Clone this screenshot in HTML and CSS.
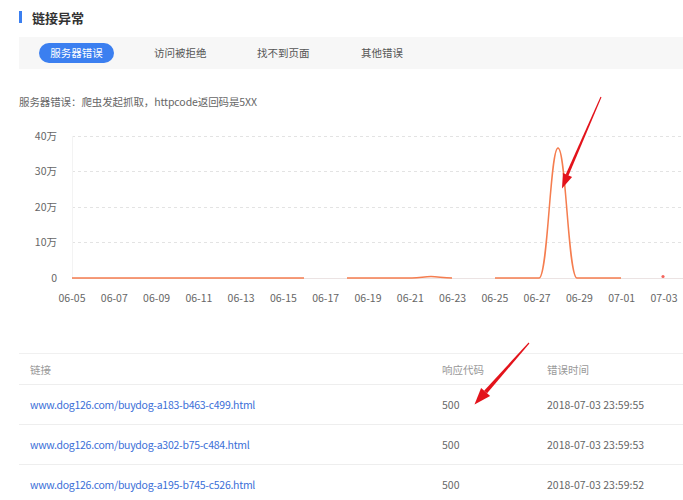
FILE: index.html
```html
<!DOCTYPE html>
<html lang="zh-CN">
<head>
<meta charset="utf-8">
<title>链接异常</title>
<link rel="stylesheet" href="styles.css">
</head>
<body>
<div class="page">
  <div class="title"><span class="title-bar"></span><span class="title-text">链接异常</span></div>
  <div class="tabs">
    <span class="tab tab-active">服务器错误</span>
    <span class="tab">访问被拒绝</span>
    <span class="tab">找不到页面</span>
    <span class="tab">其他错误</span>
  </div>
  <p class="desc">服务器错误：爬虫发起抓取，httpcode返回码是5XX</p>
  <svg class="chart" width="664" height="215" viewBox="19 110 664 215" xmlns="http://www.w3.org/2000/svg">
    <g class="grid">
      <line x1="72" y1="136.5" x2="683" y2="136.5"/>
      <line x1="72" y1="171.5" x2="683" y2="171.5"/>
      <line x1="72" y1="207.5" x2="683" y2="207.5"/>
      <line x1="72" y1="242.5" x2="683" y2="242.5"/>
    </g>
    <line class="yaxis" x1="72.5" y1="136" x2="72.5" y2="278"/>
    <line class="baseline" x1="72" y1="278.5" x2="683" y2="278.5"/>
    <g class="ylabels">
      <text x="57" y="140">40万</text>
      <text x="57" y="175">30万</text>
      <text x="57" y="211">20万</text>
      <text x="57" y="246">10万</text>
      <text x="57" y="282">0</text>
    </g>
    <g class="xlabels">
      <text x="72" y="302">06-05</text>
      <text x="114.3" y="302">06-07</text>
      <text x="156.6" y="302">06-09</text>
      <text x="198.9" y="302">06-11</text>
      <text x="241.1" y="302">06-13</text>
      <text x="283.4" y="302">06-15</text>
      <text x="325.7" y="302">06-17</text>
      <text x="368" y="302">06-19</text>
      <text x="410.3" y="302">06-21</text>
      <text x="452.6" y="302">06-23</text>
      <text x="494.9" y="302">06-25</text>
      <text x="537.1" y="302">06-27</text>
      <text x="579.4" y="302">06-29</text>
      <text x="621.7" y="302">07-01</text>
      <text x="664" y="302">07-03</text>
    </g>
    <g class="series">
      <path d="M72 278 H304"/>
      <path d="M347 278 H412 C420 278 424 276.6 431 276.6 C438 276.6 443 278 452 278"/>
      <path d="M495 278 H539 C548 278 550 148 558 148 C566 148 568 278 577 278 H621"/>
    </g>
    <circle class="dot" cx="663" cy="276.5" r="1.6"/>
  </svg>
  <div class="table">
    <div class="row row-head">
      <span class="cell cell-link">链接</span>
      <span class="cell">响应代码</span>
      <span class="cell">错误时间</span>
    </div>
    <div class="row">
      <a class="cell cell-link link" href="#">www.dog126.com/buydog-a183-b463-c499.html</a>
      <span class="cell">500</span>
      <span class="cell">2018-07-03 23:59:55</span>
    </div>
    <div class="row">
      <a class="cell cell-link link" href="#">www.dog126.com/buydog-a302-b75-c484.html</a>
      <span class="cell">500</span>
      <span class="cell">2018-07-03 23:59:53</span>
    </div>
    <div class="row">
      <a class="cell cell-link link" href="#">www.dog126.com/buydog-a195-b745-c526.html</a>
      <span class="cell">500</span>
      <span class="cell">2018-07-03 23:59:52</span>
    </div>
  </div>
</div>
<svg class="arrows" width="683" height="500" viewBox="0 0 683 500" xmlns="http://www.w3.org/2000/svg">
  <polygon class="arrow" points="600.5,96.8 601.5,97.2 568.4,175.7 565.7,174.5"/>
  <polygon class="arrow" points="572.1,177.1 562,188.5 562.9,173.1"/>
  <polygon class="arrow" points="528.6,342.6 529.4,343.4 487.1,393.3 484.1,390.7"/>
  <polygon class="arrow" points="490.1,396 474.5,404.5 481.1,388"/>
</svg>
</body>
</html>
```

FILE: styles.css
```css
html, body {
  margin: 0;
  padding: 0;
  background: #fff;
}

body {
  font-family: "Noto Sans CJK SC", "Noto Sans", sans-serif;
  font-size: 10.5px;
  color: #666;
  width: 683px;
  height: 500px;
  overflow: hidden;
  position: relative;
}

.page {
  padding: 8px 0 0 19px;
}

.title {
  display: flex;
  align-items: center;
  height: 18px;
}

.title-bar {
  width: 3px;
  height: 12px;
  background: #3b7ff0;
}

.title-text {
  margin-left: 10px;
  font-size: 13px;
  font-weight: bold;
  color: #333;
}

.tabs {
  margin-top: 11px;
  height: 32px;
  background: #f7f7f7;
  display: flex;
  align-items: center;
  padding-left: 20px;
}

.tab {
  width: 104px;
  line-height: 20px;
  color: #555;
  padding-left: 11px;
  box-sizing: border-box;
}

.tab-active {
  width: 75px;
  margin-right: 29px;
  background: #3b7ff0;
  color: #fff;
  border-radius: 10px;
  text-align: center;
  padding-left: 0;
}

.tab:nth-child(2) { padding-left: 11px; }
.tab:nth-child(3),
.tab:nth-child(4) { padding-left: 10px; }

.desc {
  margin: 25px 0 0;
  line-height: 16px;
  color: #666;
  letter-spacing: -0.1px;
}

.chart {
  display: block;
}

.grid line {
  stroke: #e3e3e3;
  stroke-width: 1;
  stroke-dasharray: 3 3;
}

.yaxis {
  stroke: #f3f3f3;
  stroke-width: 1;
}

.baseline {
  stroke: #ebe3e3;
  stroke-width: 1;
}

.ylabels text {
  font-size: 10.5px;
  fill: #666;
  text-anchor: end;
}

.xlabels text {
  font-size: 10.5px;
  fill: #666;
  text-anchor: middle;
}

.series path {
  fill: none;
  stroke: #f57d4f;
  stroke-width: 1.5;
}

.dot {
  fill: #f4645c;
}

.table {
  margin-top: 28px;
  border-top: 1px solid #f0f0f0;
}

.row {
  display: grid;
  grid-template-columns: 423px 105px 1fr;
  align-items: center;
  height: 40px;
  border-bottom: 1px solid #eeeeee;
  box-sizing: border-box;
}

.row-head {
  height: 31px;
  color: #999;
}

.cell {
  white-space: nowrap;
}

.cell-link {
  padding-left: 11px;
}

.link {
  color: #3b6fd8;
  text-decoration: none;
  letter-spacing: -0.27px;
}

.arrows {
  position: absolute;
  left: 0;
  top: 0;
  pointer-events: none;
}

.arrow {
  fill: #e3131b;
}
```
